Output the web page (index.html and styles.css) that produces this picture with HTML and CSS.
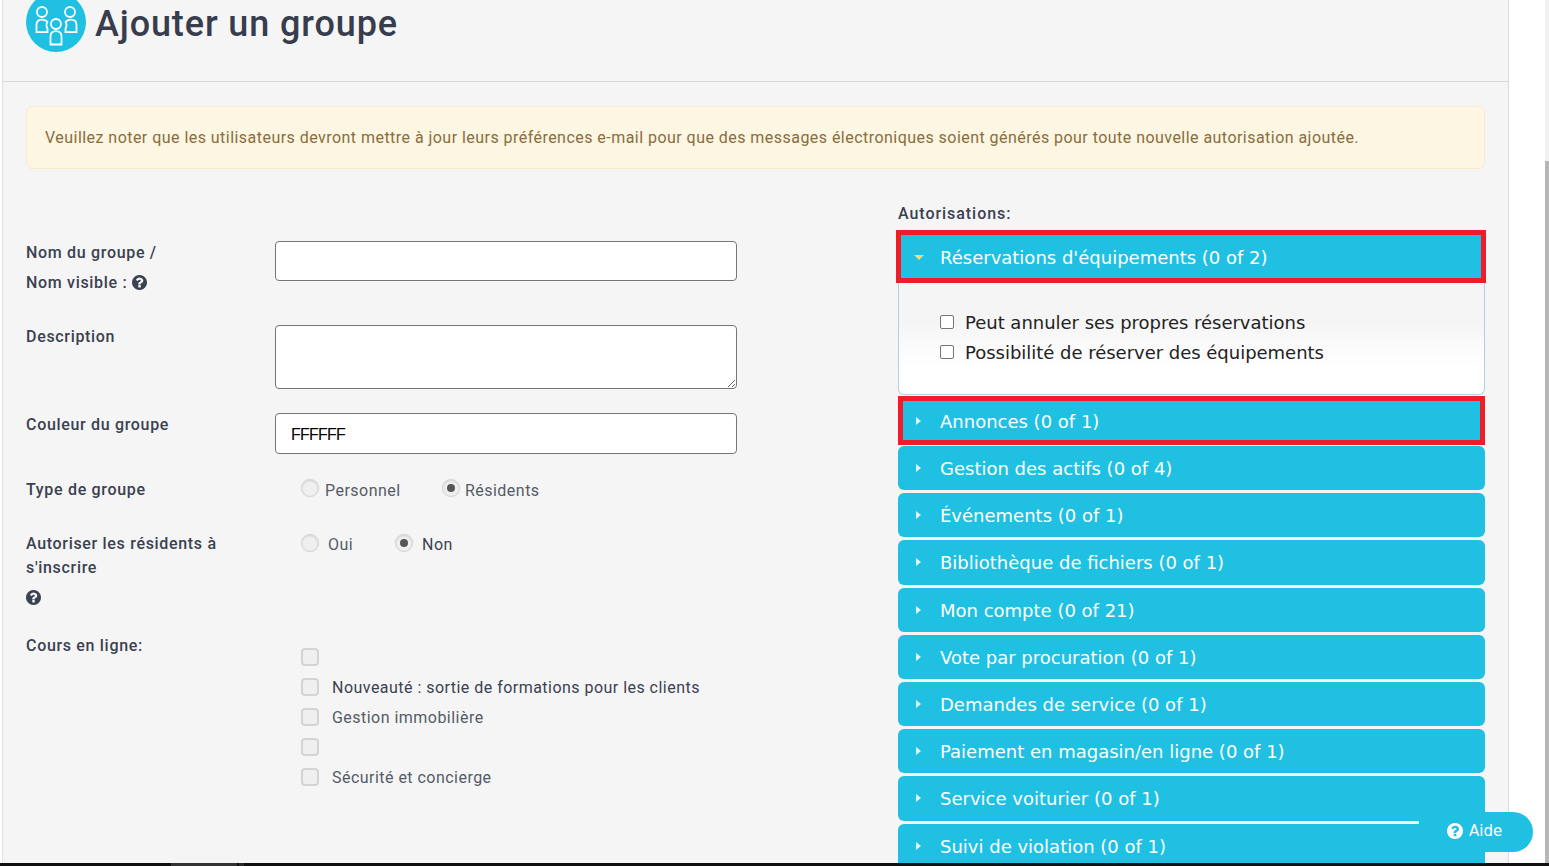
FILE: index.html
```html
<!DOCTYPE html>
<html lang="fr">
<head>
<meta charset="utf-8">
<title>Ajouter un groupe</title>
<link rel="stylesheet" href="styles.css">
</head>
<body>
<svg class="defs" width="0" height="0" aria-hidden="true">
  <symbol id="help" viewBox="128 128 1536 1536">
    <path fill="currentColor" d="M1024 1376v-192q0-14-9-23t-23-9h-192q-14 0-23 9t-9 23v192q0 14 9 23t23 9h192q14 0 23-9t9-23zm256-672q0-88-55.5-163t-138.5-116-170-41q-243 0-371 213-15 24 8 42l132 100q7 6 19 6 16 0 25-12 53-68 86-92 34-24 86-24 48 0 85.5 26t37.5 59q0 38-20 61t-68 45q-63 28-115.5 86.5t-52.5 125.5v36q0 14 9 23t23 9h192q14 0 23-9t9-23q0-19 21.5-49.5t54.5-49.5q32-18 49-28.5t46-35 44.5-48 28-60.5 12.5-81zm384 192q0 209-103 385.5t-279.5 279.5-385.5 103-385.5-103-279.5-279.5-103-385.5 103-385.5 279.5-279.5 385.5-103 385.5 103 279.5 279.5 103 385.5z"/>
  </symbol>
</svg>
<div class="viewport">
  <main class="panel">
    <header class="page-head">
      <svg class="group-icon" viewBox="26 -8 60 60" width="60" height="60" aria-hidden="true">
        <circle cx="56" cy="22" r="30" fill="#20c0e3"/>
        <g fill="none" stroke="#fff" stroke-width="1.8">
          <circle cx="42" cy="12" r="5"/>
          <circle cx="70" cy="12" r="5"/>
          <circle cx="56" cy="24" r="5"/>
          <path d="M36.500 32.200v-7.400q0-5.200 5.500-5.200q3.600 0 5.400 2.500q-.9 1.500-.9 3.200q0 1.800 1 3.200v3.700z"/>
          <path d="M76.500 32.200v-7.400q0-5.200-5.500-5.200q-3.600 0-5.400 2.500q.9 1.500.9 3.200q0 1.800-1 3.200v3.700z"/>
          <path d="M50.500 44.500v-8.200q0-5.200 5.500-5.200t5.500 5.200v8.200z"/>
        </g>
      </svg>
      <h1 class="page-title">Ajouter un groupe</h1>
    </header>

    <div class="content">
      <p class="notice">Veuillez noter que les utilisateurs devront mettre à jour leurs préférences e-mail pour que des messages électroniques soient générés pour toute nouvelle autorisation ajoutée.</p>

      <div class="columns">
        <form class="group-form">
          <div class="row row-name">
            <div class="field-label">Nom du groupe /<br>Nom visible : <svg class="help-icon"><use href="#help"/></svg></div>
            <input class="text-input input-name" type="text">
          </div>
          <div class="row row-desc">
            <div class="field-label">Description</div>
            <textarea class="text-input input-desc"></textarea>
          </div>
          <div class="row row-color">
            <div class="field-label">Couleur du groupe</div>
            <input class="text-input input-color" type="text" value="FFFFFF">
          </div>
          <div class="row row-type">
            <div class="field-label">Type de groupe</div>
            <div class="radios radios-type">
              <span class="radio"></span><span class="radio-text first-text">Personnel</span>
              <span class="radio is-on"></span><span class="radio-text">Résidents</span>
            </div>
          </div>
          <div class="row row-signup">
            <div class="field-label label-tight">Autoriser les résidents à<br>s'inscrire<span class="help-line"><svg class="help-icon"><use href="#help"/></svg></span></div>
            <div class="radios radios-signup">
              <span class="radio"></span><span class="radio-text wide-text first-yes">Oui</span>
              <span class="radio is-on"></span><span class="radio-text wide-text strong-text">Non</span>
            </div>
          </div>
          <div class="row row-courses">
            <div class="field-label">Cours en ligne:</div>
            <ul class="course-list">
              <li class="course"><span class="check"></span></li>
              <li class="course"><span class="check"></span><span class="strong-text">Nouveauté : sortie de formations pour les clients</span></li>
              <li class="course"><span class="check"></span><span>Gestion immobilière</span></li>
              <li class="course"><span class="check"></span></li>
              <li class="course"><span class="check"></span><span>Sécurité et concierge</span></li>
            </ul>
          </div>
        </form>

        <section class="permissions">
          <div class="perm-title">Autorisations:</div>
          <div class="acc-head acc-open"><span class="arrow-down"></span>Réservations d'équipements (0 of 2)</div>
          <div class="acc-body">
            <div class="perm-item"><span class="perm-check"></span>Peut annuler ses propres réservations</div>
            <div class="perm-item"><span class="perm-check"></span>Possibilité de réserver des équipements</div>
          </div>
          <div class="acc-head acc-marked"><span class="arrow"></span>Annonces (0 of 1)</div>
          <div class="acc-head"><span class="arrow"></span>Gestion des actifs (0 of 4)</div>
          <div class="acc-head"><span class="arrow"></span>Événements (0 of 1)</div>
          <div class="acc-head"><span class="arrow"></span>Bibliothèque de fichiers (0 of 1)</div>
          <div class="acc-head"><span class="arrow"></span>Mon compte (0 of 21)</div>
          <div class="acc-head"><span class="arrow"></span>Vote par procuration (0 of 1)</div>
          <div class="acc-head"><span class="arrow"></span>Demandes de service (0 of 1)</div>
          <div class="acc-head"><span class="arrow"></span>Paiement en magasin/en ligne (0 of 1)</div>
          <div class="acc-head"><span class="arrow"></span>Service voiturier (0 of 1)</div>
          <div class="acc-head"><span class="arrow"></span>Suivi de violation (0 of 1)</div>
        </section>
      </div>
    </div>
  </main>
  <div class="gutter"></div>
  <div class="scrollbar"><div class="scroll-thumb"></div></div>
</div>
<div class="taskbar"><span class="task-a"></span><span class="task-b"></span></div>
<button class="help-button" type="button"><svg class="help-button-icon"><use href="#help"/></svg>Aide</button>
</body>
</html>
```

FILE: styles.css
```css
* { box-sizing: border-box; }
html, body { margin: 0; height: 866px; overflow: hidden; background: #fff; }
body { font-family: Roboto, "Liberation Sans", sans-serif; font-size: 16px; color: #545b68; position: relative; }
.defs { position: absolute; }

.viewport { display: flex; height: 863px; overflow: hidden; }
.panel { width: 1507px; margin-left: 2px; flex: none; background: #f5f5f5; border-left: 1px solid #e2e2e2; border-right: 1px solid #dcdcdc; overflow: hidden; }
.gutter { flex: 1; }
.scrollbar { width: 4px; background: #f1f1f1; padding-top: 161px; }
.scroll-thumb { height: 702px; background: #b6b6b6; }

.page-head { height: 82px; display: flex; align-items: flex-start; gap: 9px; padding-left: 23px; border-bottom: 1px solid #d8d8d8; }
.group-icon { flex: none; margin-top: -8px; }
.page-title { margin: 0; padding-top: 1px; font-size: 36px; line-height: 46px; font-weight: 500; letter-spacing: .88px; color: #373d4c; }

.content { padding: 24px 23px 0; }
.notice { margin: 0; height: 63px; padding: 0 18px; display: flex; align-items: center; background: #fcf6e3; border: 1px solid #faebcc; border-radius: 6px; color: #8a6d3b; letter-spacing: .46px; }

.columns { display: flex; gap: 0; }
.group-form { width: 872px; flex: none; padding-top: 68px; }
.row { display: grid; grid-template-columns: 249px 462px; }
.field-label { font-weight: 500; padding-top: 1px; line-height: 30px; letter-spacing: .68px; color: #3a4150; }
.label-tight { line-height: 24px; padding-top: 0; }
.help-line { display: flex; height: 35px; align-items: center; }
.help-icon { width: 15px; height: 15px; vertical-align: -2px; color: #3a4150; }

.text-input { display: block; width: 462px; margin: 4px 0 0; border: 1px solid #767676; border-radius: 4px; background: #fff; padding: 3px 15px 0; font-family: "Liberation Sans", sans-serif; font-size: 16px; letter-spacing: -.75px; color: #000; }
.input-name { height: 40px; }
.input-desc { height: 64px; resize: vertical; }
.input-color { height: 41px; }

.row-desc, .row-color, .row-type { margin-top: 20px; }
.row-name { height: 60px; }
.row-desc { margin-top: 24px; }
.row-type { height: 30px; }
.row-signup { margin-top: 28px; height: 81px; }
.row-courses { margin-top: 17px; }

.radios { display: flex; align-items: flex-start; padding-left: 26px; line-height: 30px; letter-spacing: .47px; }
.radio { width: 18px; height: 18px; flex: none; margin-top: 5px; border-radius: 50%; background: #efefef; border: 1px solid #d6d6d6; box-shadow: inset 0 1px 2px rgba(0,0,0,.12), 0 0 1px rgba(0,0,0,.1); position: relative; }
.radio.is-on::after { content: ""; position: absolute; left: 4px; top: 4px; width: 8px; height: 8px; border-radius: 50%; background: #555; }
.radio-text { margin-left: 6px; margin-top: 2px; }
.first-text { width: 117px; margin-right: 0; }
.radios-type .radio-text:last-child { margin-left: 5px; }
.radios-signup { line-height: 28px; }
.radios-signup .radio { margin-top: 2px; }
.wide-text { margin-left: 9px; margin-top: -1px; }
.first-yes { width: 67px; }
.strong-text { color: #3a4150; }

.course-list { list-style: none; margin: 12px 0 0; padding: 0 0 0 26px; letter-spacing: .47px; }
.course { height: 30px; display: flex; align-items: center; }
.check { width: 18px; height: 18px; flex: none; margin-right: 13px; border-radius: 4px; background: #efefef; border: 2px solid #d4d4d4; }

.permissions { width: 587px; flex: none; padding-top: 33px; font-family: "DejaVu Sans", sans-serif; }
.perm-title { font-family: Roboto, sans-serif; font-weight: 500; height: 24px; line-height: 24px; margin-bottom: 4px; letter-spacing: .95px; color: #3a4150; }
.acc-head { height: 44.2px; margin-bottom: 3px; display: flex; align-items: center; padding: 1px 0 0 42px; background: #20c0e3; color: #fff; border-radius: 6px; font-size: 18px; position: relative; }
.arrow { position: absolute; left: 18px; top: 50%; margin-top: -4px; border-left: 5px solid #dff6fb; border-top: 4px solid transparent; border-bottom: 4px solid transparent; }
.arrow-down { position: absolute; left: 13px; top: 50%; margin-top: -2px; border-top: 5px solid #f4dc7a; border-left: 5px solid transparent; border-right: 5px solid transparent; }
.acc-open { height: 53px; margin: 0 -1px 0 -2px; padding: 2px 0 0 39px; border: 5px solid #f01c2a; border-radius: 0; }
.acc-marked { height: 49px; margin: 1px 0 1px; padding: 2px 0 0 37px; border: 5px solid #f01c2a; border-radius: 0; }
.acc-marked .arrow { left: 13px; }
.acc-body { height: 112px; padding: 24px 0 0 41px; background: linear-gradient(#f5f5f5 0, #f5f5f5 35%, #fff 75%); border: 1px solid #a9d3ea; border-top: 0; border-radius: 0 0 6px 6px; color: #222; font-size: 18px; letter-spacing: -.02px; }
.perm-item { height: 30px; display: flex; align-items: center; }
.perm-check { width: 14px; height: 14px; margin-right: 11px; border: 1px solid #767676; border-radius: 2px; background: #fff; flex: none; }

.taskbar { height: 3px; background: #111; display: flex; padding-left: 171px; }
.task-a { width: 66px; background: #333; }
.task-b { width: 5px; margin-left: 2px; background: #2a2a2a; }

.help-button { position: absolute; left: 1419px; top: 812px; width: 114px; height: 40px; padding: 0 0 3px 28px; border: 0; border-radius: 0 20px 20px 0; background: #20c0e3; color: #fff; font-family: "DejaVu Sans", sans-serif; font-size: 15px; display: flex; align-items: center; }
.help-button-icon { width: 16px; height: 16px; margin-right: 6px; }
```
